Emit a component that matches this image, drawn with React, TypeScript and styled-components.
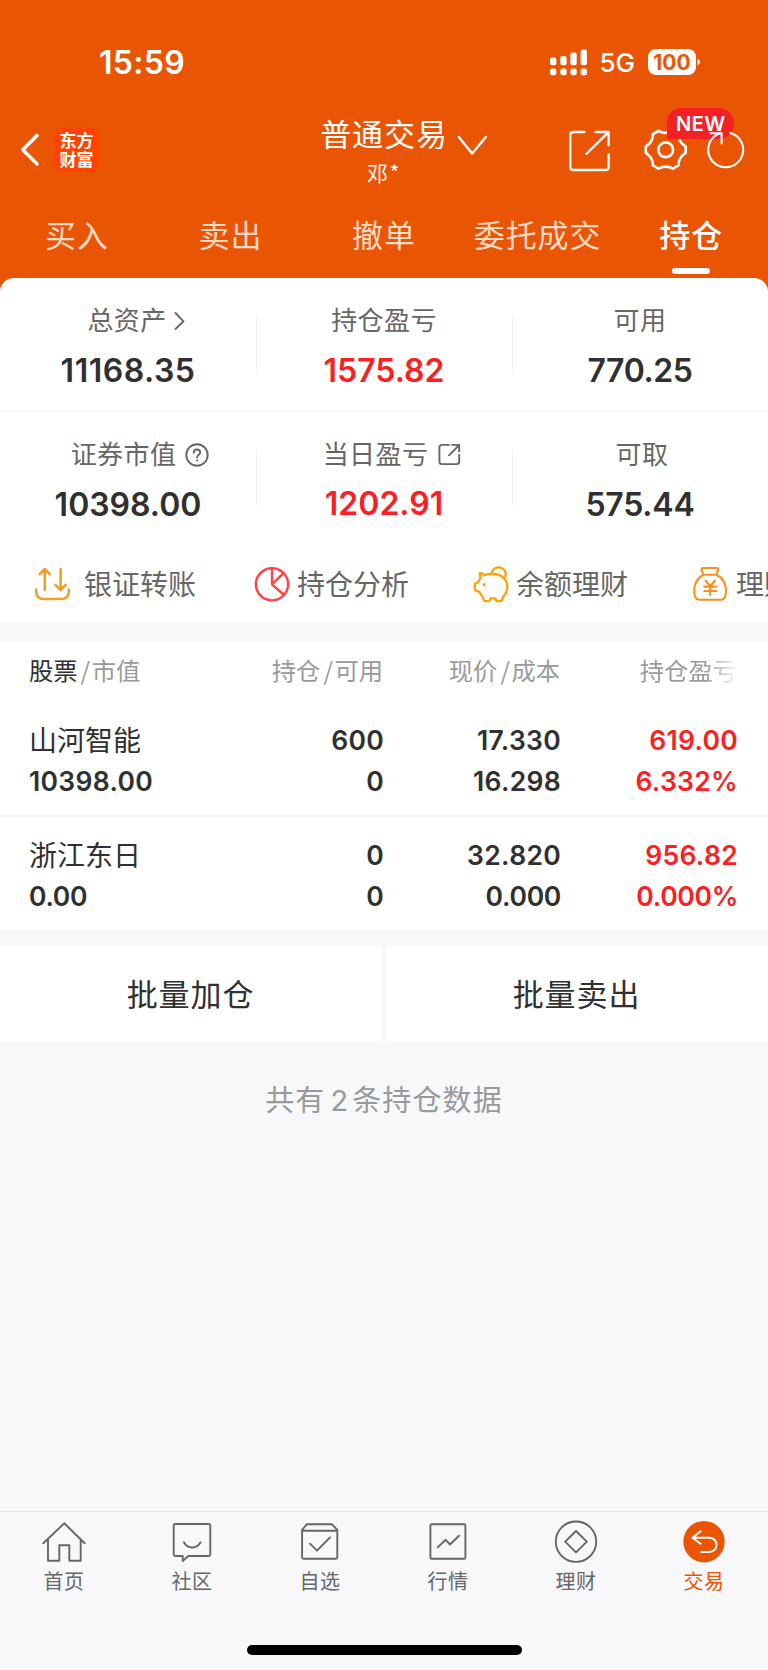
import React from "react";
import styled, { createGlobalStyle } from "styled-components";

const ORANGE = "#ea5504";
const RED = "#fb1f24";
const INK = "#303030";
const GREY = "#666666";
const CJK = `"Noto Sans CJK SC", sans-serif`;
const LATIN = `Inter, "Noto Sans CJK SC", sans-serif`;

const GlobalStyle = createGlobalStyle`
  * { box-sizing: border-box; }
  body { margin: 0; background: #f7f8fa; font-family: ${CJK}; }
  svg { display: block; flex: none; overflow: visible; }
`;

const Screen = styled.div`
  width: 768px;
  height: 1670px;
  display: flex;
  flex-direction: column;
  overflow: hidden;
  background: #f7f8fa;
`;

/* ---------- header ---------- */

const Header = styled.header`
  flex: none;
  height: 290px;
  background: ${ORANGE};
  color: #fff;
`;

const StatusBar = styled.div`
  height: 108px;
  padding: 16px 68px 0 99px;
  display: flex;
  align-items: center;
  justify-content: space-between;
`;

const Clock = styled.span`
  margin-top: 2px;
  font: 600 32px/32px ${LATIN};
  letter-spacing: 0.3px;
`;

const StatusRight = styled.div`
  display: flex;
  align-items: center;
`;

const Network = styled.span`
  margin: 2px 13px 0 12px;
  font: 500 26px/26px ${LATIN};
`;

const Battery = styled.span`
  width: 48px;
  height: 26px;
  border-radius: 8px;
  background: #fff;
  color: ${ORANGE};
  text-align: center;
  font: 700 21px/27px ${LATIN};
`;

const NavBar = styled.div`
  height: 84px;
  display: grid;
  grid-template-columns: 256px 256px 256px;
`;

const NavLeft = styled.div`
  padding: 19px 0 0 20px;
  display: flex;
  align-items: flex-start;
  gap: 14px;
`;

const Logo = styled.div`
  width: 45px;
  height: 45px;
  border-radius: 9px;
  background: #ff4400;
  padding: 3px 0 0;
  text-align: center;
  font: 700 17px/19px ${CJK};
`;

const NavCenter = styled.div`
  display: flex;
  flex-direction: column;
  align-items: center;
  position: relative;
`;

const NavTitle = styled.div`
  margin-top: 6px;
  font-size: 31px;
  line-height: 38px;
  letter-spacing: 0.9px;
`;

const NavUser = styled.div`
  margin-top: 3px;
  font-size: 21px;
  line-height: 34px;
  letter-spacing: 1.5px;
`;

const TitleArrow = styled.div`
  position: absolute;
  left: 201px;
  top: 27px;
`;

const NavRight = styled.div`
  padding: 20px 0 0 56px;
  display: flex;
  align-items: flex-start;
`;

const GearBox = styled.div`
  position: relative;
  margin: 0 16px 0 32px;
`;

const NewBadge = styled.span`
  position: absolute;
  left: 23px;
  top: -20px;
  width: 67px;
  height: 31px;
  border-radius: 15px 16px 16px 0;
  background: #f32025;
  text-align: center;
  font: 600 20.5px/31px ${LATIN};
  letter-spacing: 0.2px;
`;

const RefreshBox = styled.div`
  position: relative;
`;

const Tabs = styled.div`
  display: grid;
  grid-template-columns: repeat(5, 1fr);
  height: 86px;
`;

const Tab = styled.div<{ $active?: boolean }>`
  padding-top: 23px;
  display: flex;
  flex-direction: column;
  align-items: center;
  font-size: 31px;
  line-height: 38px;
  letter-spacing: 0.9px;
  font-weight: ${(p) => (p.$active ? 500 : 400)};
  color: ${(p) => (p.$active ? "#fff" : "#ffdbc6")};
`;

const TabMark = styled.span`
  width: 38px;
  height: 6px;
  margin-top: 15px;
  border-radius: 3px;
  background: #fff;
`;

/* ---------- asset summary ---------- */

const Card = styled.section`
  flex: none;
  height: 344px;
  margin-top: -12px;
  border-radius: 14px 14px 0 0;
  background: #fff;
`;

const SummaryRow = styled.div<{ $line?: boolean }>`
  height: 134px;
  padding-top: 24px;
  display: grid;
  grid-template-columns: repeat(3, 256px);
  border-bottom: ${(p) => (p.$line ? "2px solid #f8f8f8" : "none")};
`;

const Metric = styled.div<{ $first?: boolean }>`
  display: flex;
  flex-direction: column;
  align-items: center;
  background: linear-gradient(#f1f1f1, #f1f1f1) no-repeat left 14px / ${(p) => (p.$first ? "0 0" : "1px 57px")};
`;

const MetricLabel = styled.div<{ $shift?: number }>`
  display: flex;
  align-items: center;
  height: 33px;
  margin-left: ${(p) => p.$shift || 0}px;
  color: ${GREY};
  font-size: 26px;
  line-height: 33px;
  letter-spacing: 0.4px;
`;

const MetricValue = styled.div<{ $red?: boolean; $lift?: boolean; $track?: number }>`
  margin-top: ${(p) => (p.$lift ? 18 : 19)}px;
  color: ${(p) => (p.$red ? RED : INK)};
  font: 600 32px/34px ${LATIN};
  letter-spacing: ${(p) => p.$track || 0}px;
`;

const LabelIcon = styled.span<{ $gap: number }>`
  margin: 4px 0 0 ${(p) => p.$gap}px;
`;

const Shortcuts = styled.div`
  height: 76px;
  padding: 5px 0 0 35px;
  display: flex;
  overflow: hidden;
`;

const Shortcut = styled.div<{ $gap: number }>`
  flex: none;
  width: 219px;
  height: 65px;
  display: flex;
  align-items: center;
  gap: ${(p) => p.$gap}px;
  color: ${GREY};
  font-size: 28px;
  line-height: 36px;
  white-space: nowrap;
`;

const ShortcutText = styled.span`
  margin-top: -2px;
`;

/* ---------- holdings ---------- */

const Holdings = styled.section`
  flex: none;
  margin-top: 19px;
  background: #fff;
`;

const HeadRow = styled.div`
  height: 67px;
  padding: 11px 0 0 29px;
  display: grid;
  grid-template-columns: 180px 174px 177px 177px;
  color: #9a9a9a;
  font-size: 24.3px;
  line-height: 36px;
`;

const HeadCell = styled.div<{ $right?: boolean; $fade?: boolean }>`
  text-align: ${(p) => (p.$right ? "right" : "left")};
  white-space: nowrap;
  mask-image: ${(p) => (p.$fade ? "linear-gradient(90deg, #000 82%, transparent 101%)" : "none")};
`;

const Dark = styled.span`
  color: ${INK};
`;

const Slash = styled.span`
  margin: 0 1.5px 0 3px;
`;

const Stock = styled.div<{ $line?: boolean }>`
  height: ${(p) => (p.$line ? 109 : 113)}px;
  padding: ${(p) => (p.$line ? 12 : 18)}px 0 0 29px;
  display: grid;
  grid-template-columns: 180px 175px 177px 177px;
  grid-template-rows: 41px 41px;
  border-bottom: ${(p) => (p.$line ? "2px solid #f5f6f7" : "none")};
`;

const StockName = styled.div`
  margin-top: -1px;
  color: ${INK};
  font-size: 28px;
  line-height: 41px;
`;

const Num = styled.div<{ $red?: boolean; $left?: boolean; $tight?: boolean }>`
  text-align: ${(p) => (p.$left ? "left" : "right")};
  color: ${(p) => (p.$red ? RED : INK)};
  font: 600 26.5px/41px ${LATIN};
  letter-spacing: ${(p) => (p.$tight ? -0.3 : 0.3)}px;
`;

const BatchRow = styled.div`
  flex: none;
  margin-top: 16px;
  display: grid;
  grid-template-columns: 1fr 1fr;
  gap: 4px;
`;

const BatchButton = styled.button`
  height: 96px;
  padding: 0 1px 2px 0;
  border: 0;
  background: #fff;
  color: ${INK};
  font: 400 31px/40px ${CJK};
  letter-spacing: 0.9px;
`;

const Summary = styled.p`
  flex: 1;
  margin: 0;
  padding-top: 36px;
  text-align: center;
  color: #999;
  font-size: 29px;
  line-height: 40px;
  letter-spacing: 1.1px;
`;

const Count = styled.span`
  margin: 0 3px 0 5px;
  font: 400 29px/40px ${LATIN};
`;

/* ---------- bottom navigation ---------- */

const BottomBar = styled.nav`
  flex: none;
  height: 159px;
  border-top: 1px solid #e2e2e4;
  background: #f8f8fb;
  display: flex;
  flex-direction: column;
  align-items: center;
`;

const BottomItems = styled.div`
  width: 768px;
  height: 133px;
  padding-top: 8px;
  display: grid;
  grid-template-columns: repeat(6, 128px);
`;

const BottomItem = styled.div<{ $active?: boolean }>`
  display: flex;
  flex-direction: column;
  align-items: center;
  color: ${(p) => (p.$active ? ORANGE : GREY)};
  font-size: 20px;
  line-height: 30px;
  letter-spacing: 0.6px;
`;

const BottomLabel = styled.span`
  margin-top: 2px;
`;

const HomeIndicator = styled.div`
  width: 275px;
  height: 10px;
  border-radius: 5px;
  background: #000;
`;

/* ---------- icons ---------- */

const Line = ({ w, h, sw = 2, color = "currentColor", children }: {
  w: number; h: number; sw?: number; color?: string; children: React.ReactNode;
}) => (
  <svg width={w} height={h} viewBox={`0 0 ${w} ${h}`} fill="none" stroke={color} strokeWidth={sw}
    strokeLinecap="round" strokeLinejoin="round">{children}</svg>
);

const polar = (r: number, deg: number) => {
  const a = (deg * Math.PI) / 180;
  return `${(21.7 + r * Math.cos(a)).toFixed(2)} ${(21.7 + r * Math.sin(a)).toFixed(2)}`;
};
const gearPath =
  `M${polar(20.2, -9)}` +
  [0, 60, 120, 180, 240, 300]
    .map((a) => `L${polar(20.2, a + 9)}Q${polar(14.8, a + 30)} ${polar(20.2, a + 51)}`)
    .join("") + "Z";

const Signal = () => (
  <svg width="37" height="27" viewBox="0 0 37 27" fill="#fff">
    {[[0, 8.6], [10.3, 7], [20.4, 3.4], [30.6, 0.4]].map(([x, y]) => (
      <g key={x}>
        <rect x={x} y={y} width="6.3" height={16.3 - y} rx="2" />
        <rect x={x} y="19.6" width="6.3" height="6.6" rx="2" />
      </g>
    ))}
  </svg>
);

const bottomIcons = {
  home: <path d="M1.3 23.3 22.3 3.3 42.7 23.3M6 19.5V40.7H17.3V25.3H27.3V40.7H38.7V19.5" />,
  chat: <><path d="M5.2 4H38.8Q40.3 4 40.3 5.5V34.5Q40.3 36 38.8 36H18.3L12.7 41V36H5.2Q3.7 36 3.7 34.5V5.5Q3.7 4 5.2 4Z" /><path d="M13.9 22.3Q16.7 27.5 22.2 27.5T30.6 22.3" /></>,
  pick: <><path d="M8.7 4.3H34L39.3 9.8V37.2Q39.3 38.7 37.8 38.7H5.6Q4.1 38.7 4.1 37.2V9.8ZM4.1 10.8H39.3" /><path d="M12 23.7 19 30.7 32 17.5" /></>,
  quote: <><rect x="4.4" y="4.2" width="35" height="34.6" rx="1.3" /><path d="M11.7 27.4 19.7 19.8 24 24.5 33 15.7" /></>,
  money: <><circle cx="22" cy="21.7" r="20.2" /><path d="M22 11 32.8 21.7 22 32.4 11.2 21.7Z" /></>,
  trade: <><circle cx="22" cy="21.7" r="20.7" fill={ORANGE} stroke="none" /><path stroke="#fff" d="M18.7 11.3 10.3 17.7 18.7 23.7M10.6 17.7H27.4A7.1 7.1 0 0 1 27.4 32H19" /></>,
};

const holdings = [
  { name: "山河智能", value: "10398.00", held: "600", avail: "0", price: "17.330", cost: "16.298", gain: "619.00", rate: "6.332%" },
  { name: "浙江东日", value: "0.00", held: "0", avail: "0", price: "32.820", cost: "0.000", gain: "956.82", rate: "0.000%" },
];

const isZero = (s: string) => parseFloat(s) === 0;

const bottomItems: [keyof typeof bottomIcons, string][] = [
  ["home", "首页"], ["chat", "社区"], ["pick", "自选"], ["quote", "行情"], ["money", "理财"], ["trade", "交易"],
];

export default function App() {
  return (
    <Screen>
      <GlobalStyle />
      <Header>
        <StatusBar>
          <Clock>15:59</Clock>
          <StatusRight>
            <Signal />
            <Network>5G</Network>
            <Battery>100</Battery>
            <svg width="4" height="8" viewBox="0 0 4 8"><path d="M1.6 0.6Q4 2 4 4T1.6 7.4Z" fill="#fff" /></svg>
          </StatusRight>
        </StatusBar>
        <NavBar>
          <NavLeft>
            <Line w={20} h={45} sw={3.6}><path d="M17 8.5 2.8 22.8 17 37" /></Line>
            <Logo>东方<br />财富</Logo>
          </NavLeft>
          <NavCenter>
            <NavTitle>普通交易</NavTitle>
            <NavUser>邓*</NavUser>
            <TitleArrow>
              <Line w={30} h={20} sw={2.4}><path d="M1.8 2 15.2 18.4 28.8 2" /></Line>
            </TitleArrow>
          </NavCenter>
          <NavRight>
            <Line w={44} h={44} sw={2.3}>
              <path d="M16.5 4H6Q2.3 4 2.3 7V39.3Q2.3 42 5.2 42H38Q40.6 42 40.6 39.3V26.5M27.5 4H40.6V17.3M40 4.6 18.5 25.7" />
            </Line>
            <GearBox>
              <Line w={44} h={44} sw={2.7}><path d={gearPath} /><circle cx="21.7" cy="21.7" r="7.4" /></Line>
              <NewBadge>NEW</NewBadge>
            </GearBox>
            <RefreshBox>
              <Line w={44} h={44} sw={2.1}>
                <path d="M26.5 4.9A17.5 17.5 0 1 1 14 6L17.4 5.2M6.6 5.2H17.6V15.5" />
              </Line>
            </RefreshBox>
          </NavRight>
        </NavBar>
        <Tabs>
          {["买入", "卖出", "撤单", "委托成交"].map((t) => <Tab key={t}>{t}</Tab>)}
          <Tab $active>持仓<TabMark /></Tab>
        </Tabs>
      </Header>

      <Card>
        <SummaryRow $line>
          <Metric $first>
            <MetricLabel $shift={16}>总资产
              <LabelIcon $gap={7}><Line w={11} h={18} sw={1.9} color={GREY}><path d="M1.5 1 9.5 9.3 1.5 17" /></Line></LabelIcon>
            </MetricLabel>
            <MetricValue $track={0.5}>11168.35</MetricValue>
          </Metric>
          <Metric>
            <MetricLabel>持仓盈亏</MetricLabel>
            <MetricValue $red>1575.82</MetricValue>
          </Metric>
          <Metric>
            <MetricLabel>可用</MetricLabel>
            <MetricValue $track={-0.4}>770.25</MetricValue>
          </Metric>
        </SummaryRow>
        <SummaryRow>
          <Metric $first>
            <MetricLabel $shift={24}>证券市值
              <LabelIcon $gap={9}>
                <Line w={24} h={24} sw={1.9} color={GREY}>
                  <circle cx="12" cy="12" r="10.7" />
                  <path d="M8.8 9.7Q8.8 6.5 12 6.5T15.2 9.4C15.2 11.6 12.1 11.8 12.1 14.4M12.1 17.3V17.6" />
                </Line>
              </LabelIcon>
            </MetricLabel>
            <MetricValue>10398.00</MetricValue>
          </Metric>
          <Metric>
            <MetricLabel $shift={16}>当日盈亏
              <LabelIcon $gap={10}>
                <Line w={23} h={23} sw={1.9} color={GREY}>
                  <path d="M11 1.9H4Q1.4 1.9 1.4 4.5V18.5Q1.4 21.1 4 21.1H18.6Q21.2 21.1 21.2 18.5V12M14 1.9H21.2V8.4M20.8 2.3 11 12.3" />
                </Line>
              </LabelIcon>
            </MetricLabel>
            <MetricValue $red $lift>1202.91</MetricValue>
          </Metric>
          <Metric>
            <MetricLabel $shift={4}>可取</MetricLabel>
            <MetricValue $track={-0.2}>575.44</MetricValue>
          </Metric>
        </SummaryRow>
        <Shortcuts>
          <Shortcut $gap={13}>
            <Line w={36} h={36} sw={2.5} color="#f59b27">
              <path d="M9.8 24V3M4.6 8.2 9.8 3 15 8.2M25.6 3V24M20.4 18.8 25.6 24 30.8 18.8M1.2 23.5V25.2Q1.2 33 9 33H26Q33.8 33 33.8 25.2V23.5" />
            </Line>
            <ShortcutText>银证转账</ShortcutText>
          </Shortcut>
          <Shortcut $gap={7}>
            <Line w={36} h={36} sw={2.4} color="#ff4448">
              <circle cx="18" cy="18.3" r="16.1" /><path d="M18 2.2V18.3L29.3 7.3M18 18.3 30 29" />
            </Line>
            <ShortcutText>持仓分析</ShortcutText>
          </Shortcut>
          <Shortcut $gap={7}>
            <Line w={36} h={36} sw={2.3} color="#fba40a">
              <path d="M18.8 7.4A7 6.6 0 1 1 31 12.4" />
              <path d="M6.8 7.2Q9.5 7.2 11.5 9.3Q14 8 19 8Q25 7.8 28.7 10.2Q34.2 13.8 34.2 20.2C34.2 25 32.6 28.8 29.8 31Q29.3 35.1 27.8 35.1H24.3Q22.8 35.1 22.6 32.3H17.4Q17 35.1 15.6 35.1H12.2Q10.6 35.1 9.8 30.8Q7.5 29 6.6 26L2.8 24.4Q1.8 24 1.8 22.8V18.4Q1.8 17.4 2.8 17.2L5 16.4Q5.7 14 7.6 12.1Q6.5 9.5 6.8 7.2Z" />
              <circle cx="11.3" cy="18.8" r="0.6" fill="#fba40a" />
            </Line>
            <ShortcutText>余额理财</ShortcutText>
          </Shortcut>
          <Shortcut $gap={8}>
            <Line w={36} h={36} sw={2.1} color="#f99121">
              <path d="M11.5 8.7 9.6 4Q9 2 11 2H24.8Q26.8 2 26.2 4L24.4 8.7ZM11.5 8.7C5.5 11.5 2.2 18 2.2 24Q2.2 33.7 7 33.7H29.5Q34 33.7 34 24C34 18 30.5 11.5 24.4 8.7" />
              <path d="M13.5 14.5 18.2 20 23 14.5M12.3 20.6H24.2M12.3 25H24.2M18.2 20V29" />
            </Line>
            <ShortcutText>理财</ShortcutText>
          </Shortcut>
        </Shortcuts>
      </Card>

      <Holdings>
        <HeadRow>
          <HeadCell><Dark>股票</Dark><Slash>/</Slash>市值</HeadCell>
          <HeadCell $right>持仓<Slash>/</Slash>可用</HeadCell>
          <HeadCell $right>现价<Slash>/</Slash>成本</HeadCell>
          <HeadCell $right $fade>持仓盈亏</HeadCell>
        </HeadRow>
        {holdings.map((h, i) => (
          <Stock key={h.name} $line={i === 0}>
            <StockName>{h.name}</StockName>
            <Num>{h.held}</Num>
            <Num>{h.price}</Num>
            <Num $red>{h.gain}</Num>
            <Num $left $tight={isZero(h.value)}>{h.value}</Num>
            <Num>{h.avail}</Num>
            <Num $tight={isZero(h.cost)}>{h.cost}</Num>
            <Num $red $tight={isZero(h.rate)}>{h.rate}</Num>
          </Stock>
        ))}
      </Holdings>

      <BatchRow>
        <BatchButton>批量加仓</BatchButton>
        <BatchButton>批量卖出</BatchButton>
      </BatchRow>
      <Summary>共有<Count>2</Count>条持仓数据</Summary>

      <BottomBar>
        <BottomItems>
          {bottomItems.map(([icon, label]) => (
            <BottomItem key={icon} $active={icon === "trade"}>
              <Line w={44} h={44} sw={1.9}>{bottomIcons[icon]}</Line>
              <BottomLabel>{label}</BottomLabel>
            </BottomItem>
          ))}
        </BottomItems>
        <HomeIndicator />
      </BottomBar>
    </Screen>
  );
}
